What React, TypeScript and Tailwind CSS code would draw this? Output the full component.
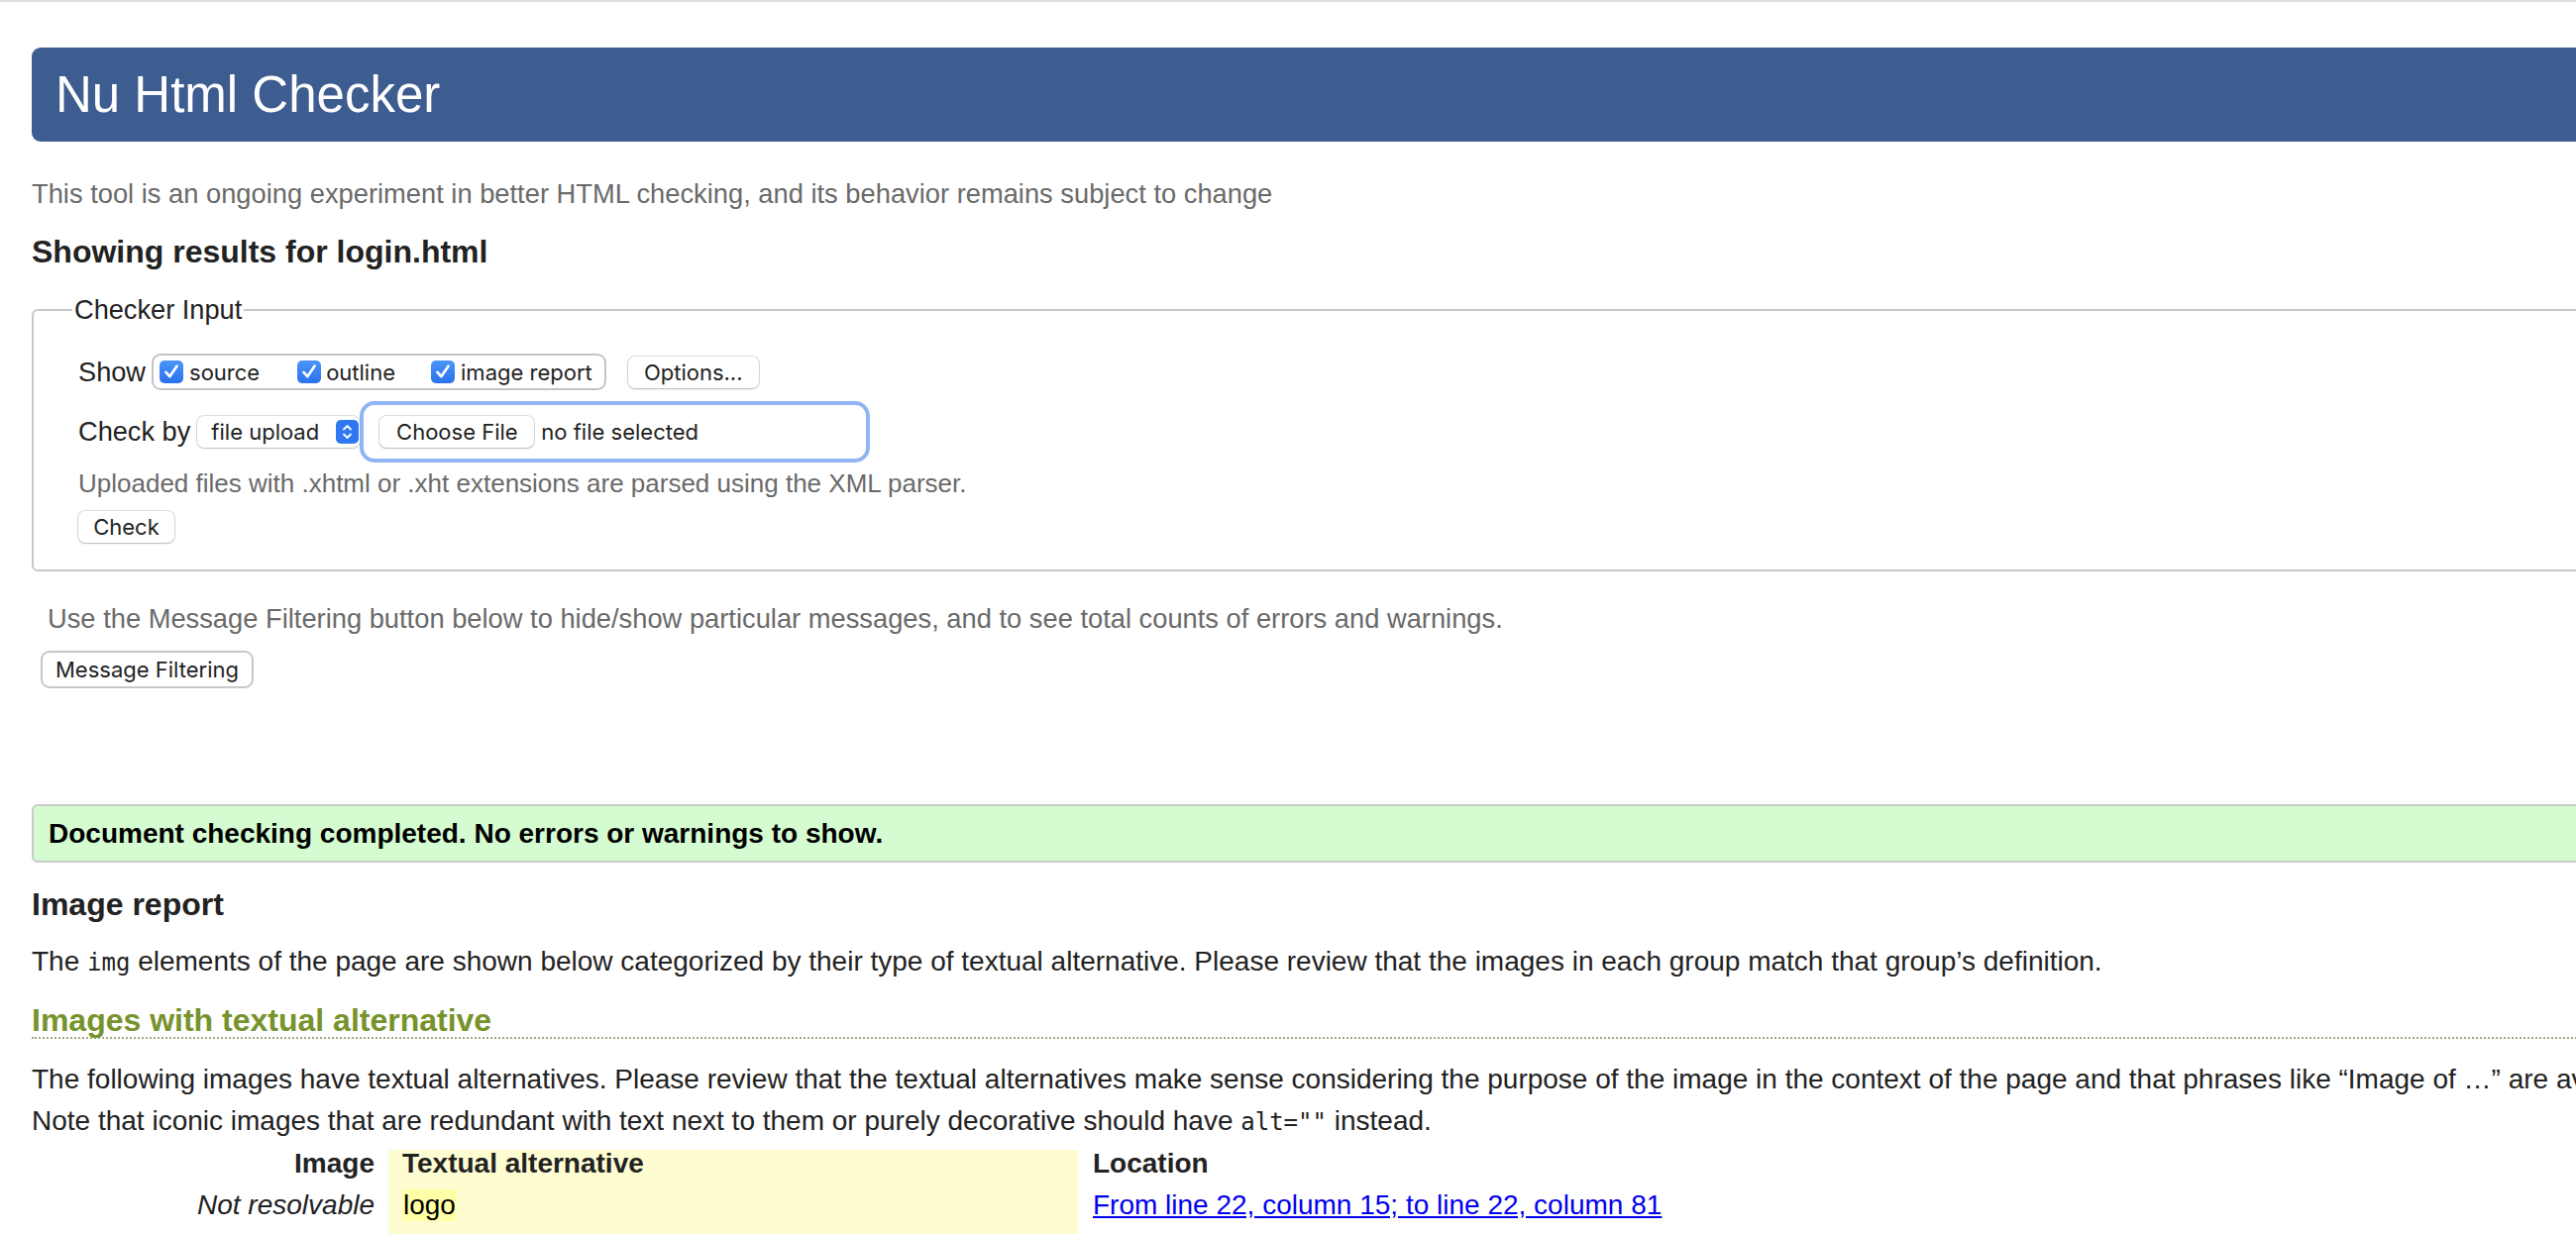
import React from 'react';

const Checkbox = () => (
  <svg width="24" height="23" viewBox="0 0 24 23" className="shrink-0">
    <defs>
      <linearGradient id="cbg" x1="0" y1="0" x2="0" y2="1">
        <stop offset="0" stopColor="#4b95f9" />
        <stop offset="1" stopColor="#2a72ee" />
      </linearGradient>
    </defs>
    <rect x="0" y="0" width="24" height="23" rx="5" fill="url(#cbg)" />
    <path d="M6.5 11.8 L10.3 16.2 L17.6 5.6" fill="none" stroke="#fff" strokeWidth="2.6" strokeLinecap="round" strokeLinejoin="round" />
  </svg>
);

const SelectArrows = () => (
  <svg width="23" height="24" viewBox="0 0 23 24" className="shrink-0">
    <rect x="0" y="0" width="23" height="24" rx="5" fill="#2f78f0" />
    <path d="M8 9.5 L11.5 6 L15 9.5" fill="none" stroke="#fff" strokeWidth="1.8" strokeLinecap="round" strokeLinejoin="round" />
    <path d="M8 14.5 L11.5 18 L15 14.5" fill="none" stroke="#fff" strokeWidth="1.8" strokeLinecap="round" strokeLinejoin="round" />
  </svg>
);

const btn =
  "bg-white rounded-[7px] shadow-[0_0_0_1px_rgba(0,0,0,0.12),0_1px_2px_rgba(0,0,0,0.18)] font-['Inter',sans-serif] text-[22px] text-[#222] flex items-center justify-center";

export default function App() {
  return (
    <div className="w-[2600px] h-[1246px] overflow-hidden bg-white text-[#222] text-[28px] leading-[32px] font-['Liberation_Sans','Arial',sans-serif]">
      <div className="h-[2px] bg-[#dedede]" />
      <div className="w-[2680px] pl-[32px]">
        {/* Banner */}
        <h1 className="mt-[46px] h-[95px] flex items-center pl-[24px] bg-[#3d5c90] rounded-l-[9px] text-white text-[51px] font-normal">
          Nu Html Checker
        </h1>

        <p className="mt-[37px] text-[27.3px] text-[#6a6a6a]">
          This tool is an ongoing experiment in better HTML checking, and its behavior remains subject to change
        </p>

        <h3 className="mt-[23px] text-[32px] leading-[38px] font-bold">Showing results for login.html</h3>

        {/* Checker input */}
        <fieldset className="mt-[24px] border-2 border-[#c9c9c9] rounded-[6px] pl-[45px] pt-[28px] pb-[27px] text-[27.2px]">
          <legend className="-ml-[6px] px-[2px] leading-[32px]">Checker Input</legend>

          <div className="flex items-center h-[37px]">
            <span>Show</span>
            <div className="ml-[6px] h-[37px] border-2 border-[#c4c4c4] rounded-[9px] pl-[6px] pr-[12px] flex items-center font-['Inter',sans-serif] text-[22px]">
              <Checkbox />
              <span className="ml-[6px]">source</span>
              <span className="ml-[38px] flex"><Checkbox /></span>
              <span className="ml-[5px]">outline</span>
              <span className="ml-[36px] flex"><Checkbox /></span>
              <span className="ml-[6px]">image report</span>
            </div>
            <div className={`${btn} ml-[22px] w-[132px] h-[32px]`}>Options...</div>
          </div>

          <div className="mt-[11px] flex items-center h-[62px]">
            <span>Check by</span>
            <div className="ml-[7px] w-[164px] h-[32px] rounded-[7px] bg-white shadow-[0_0_0_1px_rgba(0,0,0,0.12),0_1px_2px_rgba(0,0,0,0.15)] flex items-center justify-between pl-[14px] pr-[1px] font-['Inter',sans-serif] text-[22px]">
              <span>file upload</span>
              <SelectArrows />
            </div>
            <div className="w-[515px] h-[62px] border-4 border-[#90b4f4] rounded-[15px] flex items-center pl-[16px] font-['Inter',sans-serif] text-[22px]">
              <div className={`${btn} w-[156px] h-[32px]`}>Choose File</div>
              <span className="ml-[7px]">no file selected</span>
            </div>
          </div>

          <p className="mt-[5px] text-[26px] text-[#6a6a6a]">
            Uploaded files with .xhtml or .xht extensions are parsed using the XML parser.
          </p>

          <div className={`${btn} mt-[12px] w-[97px] h-[32px]`}>Check</div>
        </fieldset>

        <p className="mt-[32px] pl-[16px] text-[27.3px] text-[#6a6a6a]">
          Use the Message Filtering button below to hide/show particular messages, and to see total counts of errors and warnings.
        </p>
        <div className="mt-[16px] ml-[9px] w-fit h-[38px] px-[13px] border-2 border-[#c8c8c8] rounded-[9px] bg-white flex items-center font-['Inter',sans-serif] text-[22px]">
          Message Filtering
        </div>

        {/* Result */}
        <div className="mt-[117px] h-[59px] border-2 border-[#cacaca] rounded-[6px] bg-[#d5fcd1] pl-[15px] flex items-center font-bold text-black">
          Document checking completed. No errors or warnings to show.
        </div>

        <h3 className="mt-[23px] text-[32px] leading-[38px] font-bold">Image report</h3>
        <p className="mt-[23px]">
          The <code className="font-['DejaVu_Sans_Mono',monospace] text-[24px]">img</code> elements of the page are shown below categorized by their type of textual alternative. Please review that the images in each group match that group’s definition.
        </p>

        <h4 className="mt-[26px] pb-[1px] text-[32px] leading-[32px] font-bold text-[#76932c] border-b-2 border-dotted border-[#a8a67c]">
          Images with textual alternative
        </h4>
        <p className="mt-[20px] leading-[42px] whitespace-nowrap">
          The following images have textual alternatives. Please review that the textual alternatives make sense considering the purpose of the image in the context of the page and that phrases like “Image of …” are avoided.
          <br />
          Note that iconic images that are redundant with text next to them or purely decorative should have{' '}
          <code className="font-['DejaVu_Sans_Mono',monospace] text-[24px]">alt=""</code> instead.
        </p>

        {/* Table */}
        <div className="mt-[7px] grid grid-cols-[360px_696px_1fr] leading-[28px]">
          <div className="h-[36px] text-right pr-[14px] font-bold">Image</div>
          <div className="h-[36px] bg-[#fefdd2] pl-[14px] font-bold">Textual alternative</div>
          <div className="h-[36px] pl-[15px] font-bold">Location</div>

          <div className="h-[60px] pt-[6px] text-right pr-[14px] italic">Not resolvable</div>
          <div className="h-[60px] pt-[4px] bg-[#fefdd2] pl-[14px]">
            <span className="inline-block leading-[32px] px-[1px] bg-[#ffffa6] text-black">logo</span>
          </div>
          <div className="h-[60px] pt-[6px] pl-[15px]">
            <a href="#" className="text-[#0000ee] underline">From line 22, column 15; to line 22, column 81</a>
          </div>
        </div>
      </div>
    </div>
  );
}
